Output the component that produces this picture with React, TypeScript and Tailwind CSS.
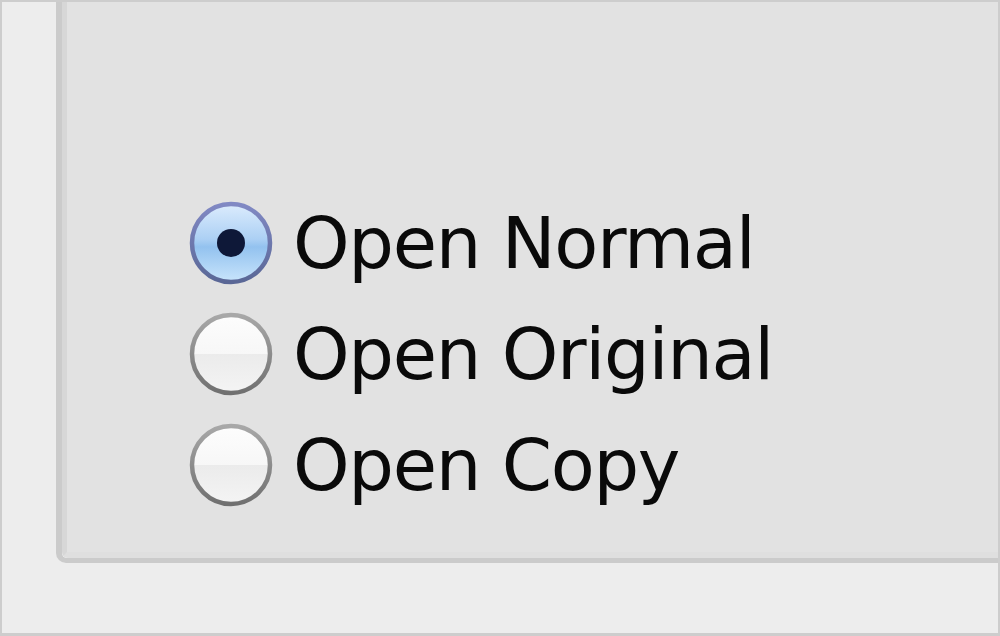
import React from "react";

function Radio({ checked, id }: { checked: boolean; id: string }) {
  return (
    <svg width="86" height="86" viewBox="0 0 86 86" className="shrink-0">
      <defs>
        <linearGradient id={`f-${id}`} x1="0" y1="0" x2="0" y2="1">
          {checked ? (
            <>
              <stop offset="0" stopColor="#dcecfd" />
              <stop offset="0.45" stopColor="#acd0f4" />
              <stop offset="0.55" stopColor="#93c2ef" />
              <stop offset="1" stopColor="#c9e5fc" />
            </>
          ) : (
            <>
              <stop offset="0" stopColor="#fdfdfd" />
              <stop offset="0.5" stopColor="#f7f7f7" />
              <stop offset="0.5" stopColor="#ebebeb" />
              <stop offset="1" stopColor="#f4f4f4" />
            </>
          )}
        </linearGradient>
        <linearGradient id={`s-${id}`} x1="0" y1="0" x2="0" y2="1">
          {checked ? (
            <>
              <stop offset="0" stopColor="#8189c4" />
              <stop offset="1" stopColor="#5a6796" />
            </>
          ) : (
            <>
              <stop offset="0" stopColor="#a8a8a8" />
              <stop offset="1" stopColor="#707070" />
            </>
          )}
        </linearGradient>
      </defs>
      <circle cx="43" cy="43" r="39" fill={`url(#f-${id})`} stroke={`url(#s-${id})`} strokeWidth="4.5" />
      {checked && <circle cx="43" cy="43" r="14" fill="#0e1838" />}
    </svg>
  );
}

function Row({ checked, label, id }: { checked: boolean; label: string; id: string }) {
  return (
    <div className="flex h-[111px] items-center gap-[19px]">
      <Radio checked={checked} id={id} />
      <span
        className="text-[72px] leading-none tracking-[-1.3px] text-[#0a0a0a]"
        style={{ fontFamily: '"DejaVu Sans", "Noto Sans", sans-serif' }}
      >
        {label}
      </span>
    </div>
  );
}

export default function App() {
  return (
    <div className="h-[636px] w-[1000px] overflow-hidden border-b-[3px] border-l-2 border-r-2 border-t-2 border-[#cdcdcd] bg-[#ededed]">
      <div className="ml-[54px] h-[561px] rounded-bl-[10px] border-b-[5px] border-l-[6px] border-[#cbcbcb]">
        <div className="h-full rounded-bl-[6px] border-b-[6px] border-l-[5px] border-b-[#dfdfdf] border-l-[#d7d7d7] bg-[#e2e2e2] pl-[121px] pt-[185px]">
          <Row checked id="a" label="Open Normal" />
          <Row checked={false} id="b" label="Open Original" />
          <Row checked={false} id="c" label="Open Copy" />
        </div>
      </div>
    </div>
  );
}
